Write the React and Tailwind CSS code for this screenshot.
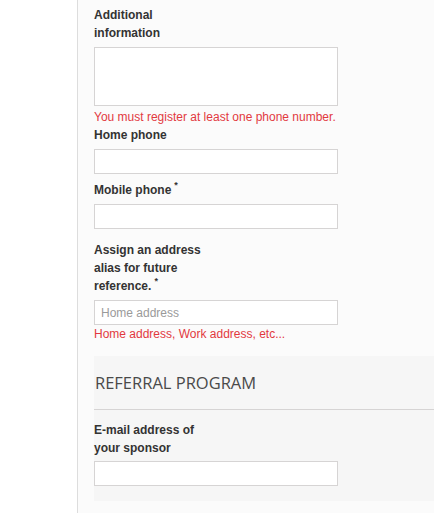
export default function App() {
  const label = "block w-[110px] text-[12px] leading-[18px] font-bold text-[#333333]";
  const input = "block w-[244px] h-[25px] border border-[#d6d4d4] bg-white";
  const star = <span className="inline-block align-top text-[9px] leading-[9px] font-bold ml-[3px]">*</span>;
  return (
    <div className="flex min-h-[513px] w-[434px] overflow-hidden bg-white font-['Liberation_Sans',Arial,sans-serif]">
      <div className="w-[77px] shrink-0 bg-white" />
      <div className="flex-1 border-l border-[#dddddd] bg-[#fbfbfb] pl-[16px] pt-[6px]">
        <label className={label}>Additional information</label>
        <div className="mt-[5px] w-[244px] h-[59px] border border-[#d6d4d4] bg-white" />
        <p className="mt-[2px] text-[12px] leading-[18px] text-[#e2393f]">You must register at least one phone number.</p>
        <label className={label}>Home phone</label>
        <div className={`mt-[5px] ${input}`} />
        <label className={`mt-[7px] ${label} w-auto`}>Mobile phone{star}</label>
        <div className={`mt-[5px] ${input}`} />
        <label className={`mt-[12px] ${label}`}>Assign an address alias for future reference.{star}</label>
        <div className={`mt-[5px] ${input} flex items-center pl-[6px] text-[12px] text-[#9a9a9a]`}>Home address</div>
        <p className="text-[12px] leading-[18px] text-[#e2393f]">Home address, Work address, etc...</p>
        <div className="mt-[13px] bg-[#f6f6f6] pb-[15px]">
          <h3 className="pt-[16px] pb-[15px] pl-[1px] text-[16.5px] leading-[22px] text-[#4a4a4a] border-b border-[#d6d4d4] font-['Open_Sans',sans-serif]">REFERRAL PROGRAM</h3>
          <label className={`mt-[11px] ${label}`}>E-mail address of your sponsor</label>
          <div className={`mt-[4px] ${input}`} />
        </div>
      </div>
    </div>
  );
}
